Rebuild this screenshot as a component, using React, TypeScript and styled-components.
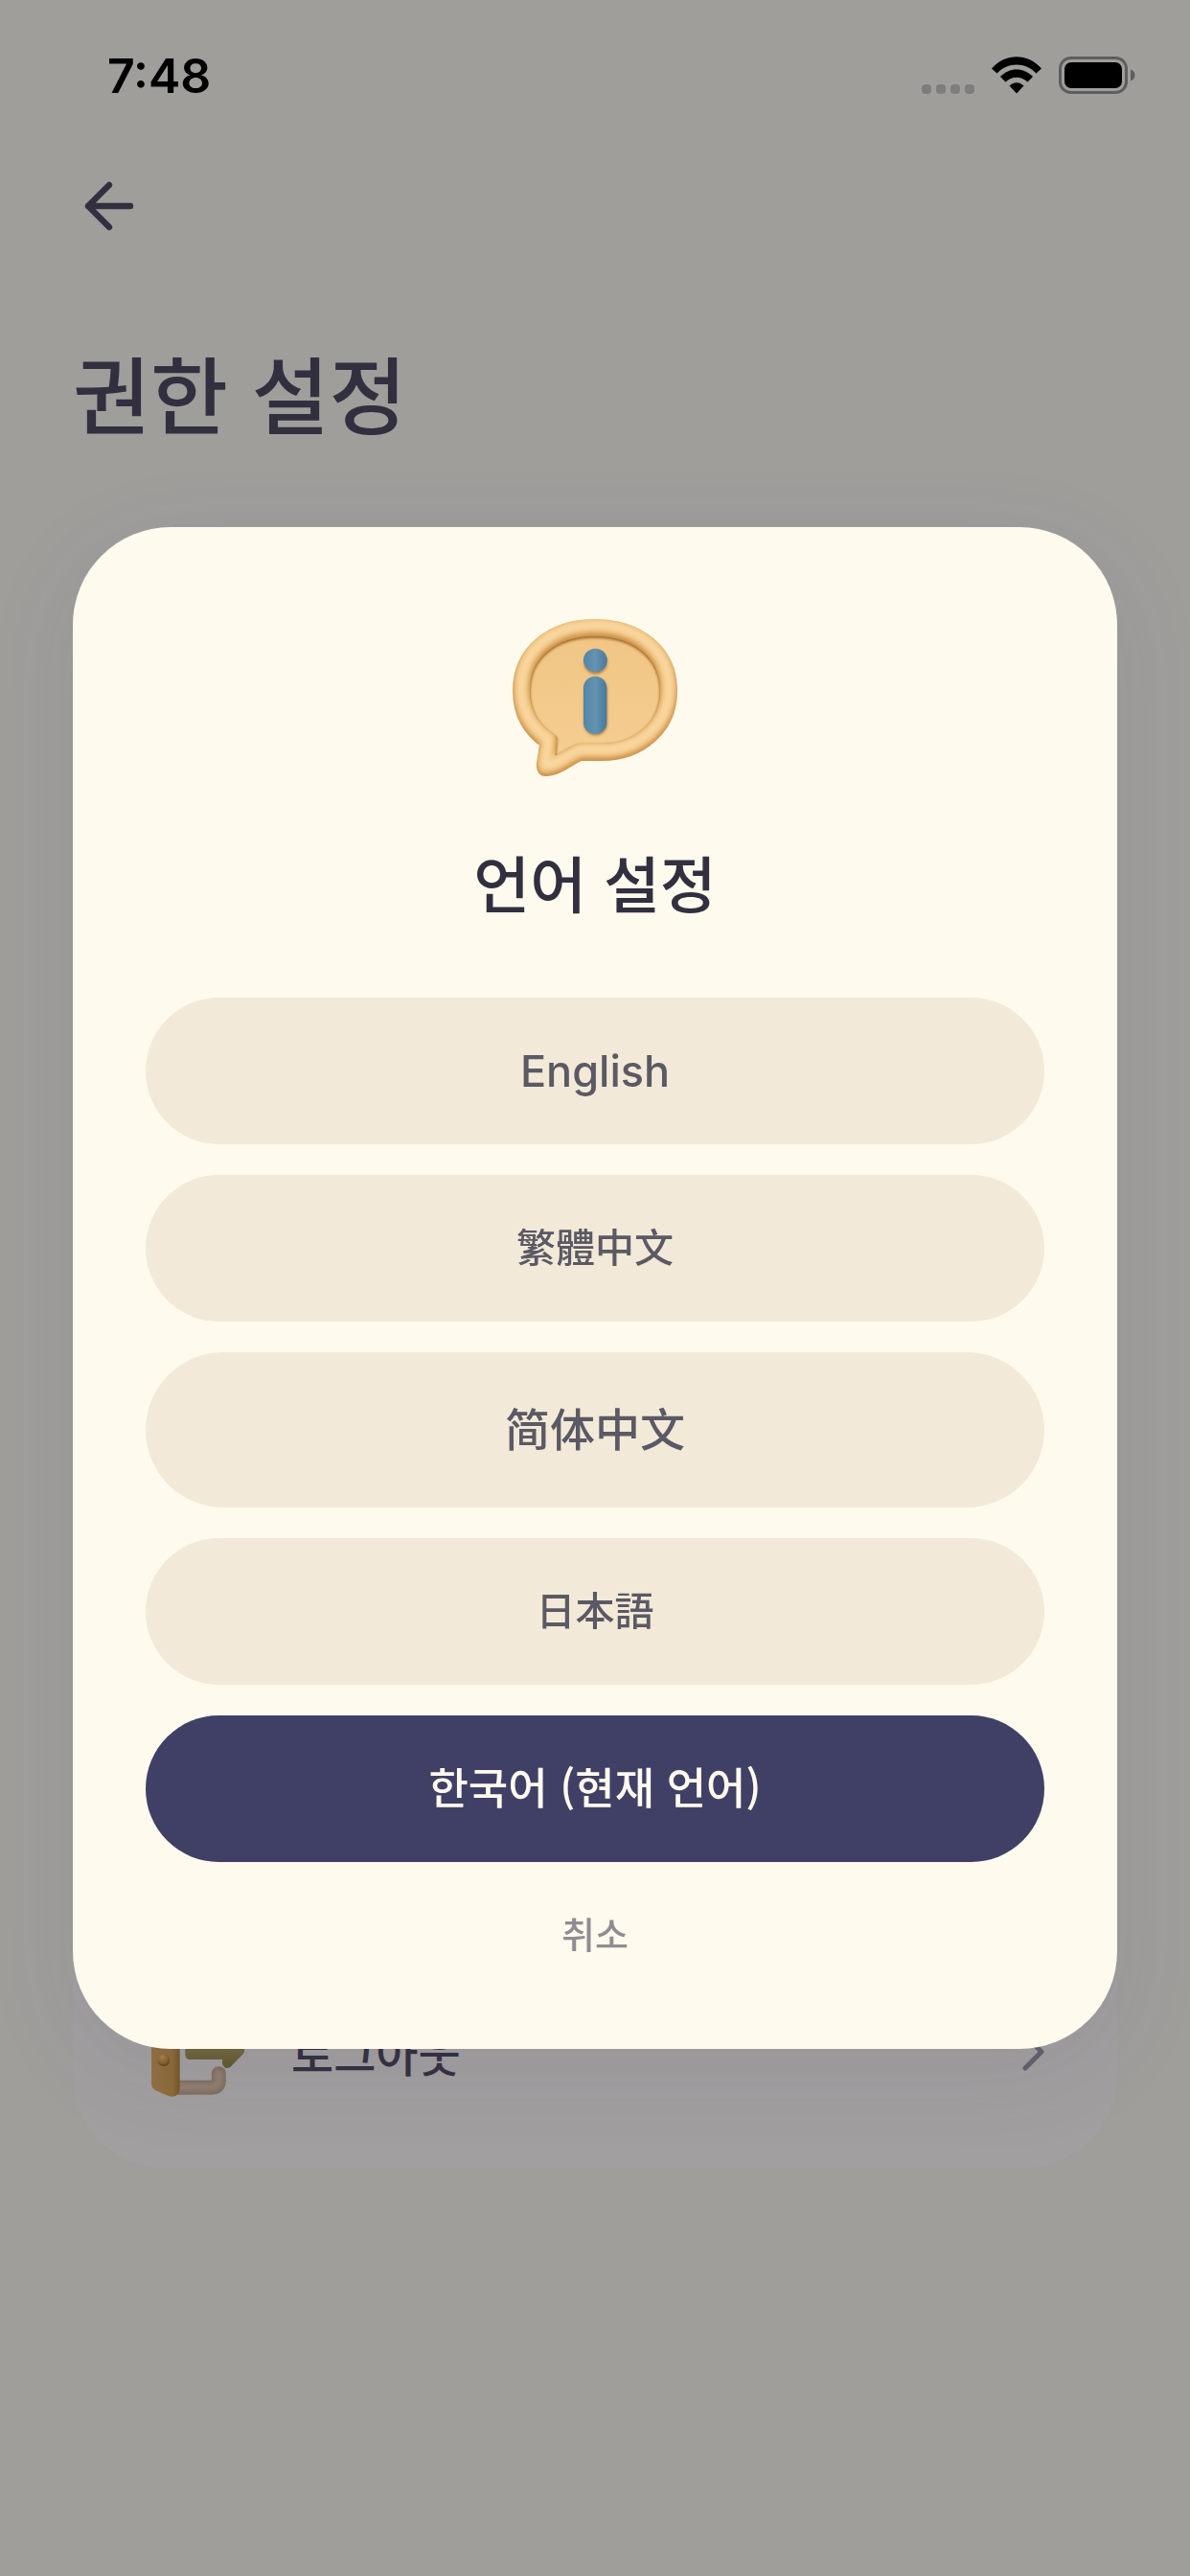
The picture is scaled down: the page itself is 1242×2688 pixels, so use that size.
import React from "react";
import styled, { createGlobalStyle } from "styled-components";

const fonts = {
  latin: `Inter, "Noto Sans CJK KR", sans-serif`,
  ko: `"Noto Sans CJK KR", sans-serif`,
  ja: `"Noto Sans CJK JP", sans-serif`,
  zh: `"Noto Sans CJK SC", sans-serif`,
};

const GlobalStyle = createGlobalStyle`
  *, *::before, *::after { box-sizing: border-box; }
  body {
    margin: 0;
    background: #9f9e9b;
    color: #32303f;
    font-family: ${fonts.ko};
  }
  button {
    border: 0;
    padding: 0;
    background: none;
    color: inherit;
    cursor: pointer;
  }
  svg { display: block; flex: none; }
`;

const Page = styled.div`
  min-height: 100vh;
  display: flex;
  flex-direction: column;
  padding-bottom: 426px;
`;

const StatusBar = styled.header`
  display: flex;
  align-items: center;
  justify-content: space-between;
  height: 158px;
  padding: 0 57px 0 112px;
`;

const Time = styled.time`
  font: 600 50px/60px ${fonts.latin};
  color: #000;
`;

const StatusIcons = styled.div`
  display: flex;
  align-items: center;
  gap: 18px;
`;

const NavBar = styled.nav`
  display: flex;
  align-items: center;
  height: 114px;
  padding: 0 76px;
`;

const BackButton = styled.button`
  display: grid;
  place-items: center;
  width: 76px;
  height: 76px;
`;

const PageTitle = styled.h1`
  margin: 72px 76px 0;
  font-size: 88px;
  line-height: 128px;
  font-weight: 500;
`;

const SettingsCard = styled.main`
  flex: 1;
  display: flex;
  flex-direction: column;
  justify-content: flex-end;
  margin: 96px 76px 0;
  padding: 64px 76px;
  border-radius: 96px;
  background: #a19fa0;
`;

const SettingsRow = styled.button`
  display: flex;
  align-items: center;
  gap: 38px;
  width: 100%;
  text-align: left;
`;

const RowLabel = styled.span`
  flex: 1;
  font: 500 48px/72px ${fonts.ko};
`;

const Overlay = styled.div`
  position: fixed;
  inset: 0;
  display: flex;
  align-items: center;
  justify-content: center;
  padding: 76px;
`;

const Dialog = styled.section`
  display: flex;
  flex-direction: column;
  align-items: center;
  width: 100%;
  padding: 76px;
  border-radius: 102px;
  background: #fffaee;
  box-shadow: 0 24px 96px rgba(92, 72, 100, 0.1);
`;

const DialogTitle = styled.h2`
  margin: 51px 0 72px;
  font-size: 64px;
  line-height: 100px;
  font-weight: 500;
`;

const LanguageList = styled.div`
  display: flex;
  flex-direction: column;
  gap: 32px;
  width: 100%;
`;

const LanguageButton = styled.button<{ $font: string; $size: number; $line?: number; $current?: boolean }>`
  padding: ${(p) => (p.$font === fonts.latin ? "48px" : "45px 48px 51px")};
  border-radius: 81px;
  background: ${(p) => (p.$current ? "#404066" : "#f2e9d8")};
  color: ${(p) => (p.$current ? "#fffaee" : "#5b5964")};
  font-family: ${(p) => p.$font};
  font-weight: 500;
  font-size: ${(p) => p.$size}px;
  line-height: ${(p) => p.$line ?? 57}px;
`;

const CancelButton = styled.button`
  margin-top: 32px;
  padding: 0 48px 4px;
  font: 500 38px/83px ${fonts.ko};
  color: #8f8d92;
`;

const SignalDots = () => (
  <svg width="55" height="40" viewBox="0 0 55 40" fill="#7f7d7c" aria-hidden="true">
    {[0, 15, 30, 45].map((x) => (
      <rect key={x} x={x} y="29" width="10" height="10" rx="4" />
    ))}
  </svg>
);

const WifiIcon = () => (
  <svg width="52" height="40" viewBox="0 0 52 40" aria-hidden="true">
    <path d="M0 12.500C14-4 38-4 52 12.500L46.500 17.500C35 5.500 17 5.500 5.500 17.500Z" />
    <path d="M9 21C18.500 11 33.500 11 43 21L37.500 26.500C31 20 21 20 14.500 26.500Z" />
    <path d="M18.500 30.500C23 26 29 26 33.500 30.500L26 38.500Z" />
  </svg>
);

const BatteryIcon = () => (
  <svg width="80" height="40" viewBox="0 0 80 40" aria-hidden="true">
    <rect x="1.500" y="1.500" width="69" height="36" rx="11" fill="none" stroke="#5f5e5d" strokeWidth="3" />
    <rect x="6" y="6" width="60" height="27" rx="7" />
    <path d="M75 13.500C81 15.500 81 23.500 75 25.500Z" fill="#5f5e5d" />
  </svg>
);

const BackArrow = () => (
  <svg width="52" height="52" viewBox="0 0 52 52" fill="none" stroke="#32303f" strokeWidth="6.400" strokeLinecap="round" strokeLinejoin="round" aria-hidden="true">
    <path d="M48 26H4M26 4L4 26L26 48" />
  </svg>
);

const Chevron = () => (
  <svg width="24" height="44" viewBox="0 0 24 44" fill="none" stroke="#62606b" strokeWidth="5" strokeLinecap="round" strokeLinejoin="round" aria-hidden="true">
    <path d="M4 5L21 22L4 39" />
  </svg>
);

const rim =
  "M362 105C500 105 594 185 594 302C594 418 500 495 385 495L318 495C292 500 245 544 208 543C202 535 214 510 216 460C160 422 132 370 132 302C132 185 225 105 362 105Z";

const InfoIcon = () => (
  <svg width="192" height="192" viewBox="75 18 576 576" aria-hidden="true">
    <defs>
      <linearGradient id="panel" x1="0" y1="0" x2="0" y2="1">
        <stop offset="0" stopColor="#f0c584" />
        <stop offset="1" stopColor="#f6ce92" />
      </linearGradient>
      <linearGradient id="blue" x1="0" y1="0" x2="1" y2="0">
        <stop offset="0" stopColor="#5285a6" />
        <stop offset="0.500" stopColor="#6593b1" />
        <stop offset="1" stopColor="#487a9d" />
      </linearGradient>
      <filter id="soft" x="-20%" y="-20%" width="140%" height="140%">
        <feGaussianBlur stdDeviation="8" />
      </filter>
      <filter id="softer" x="-30%" y="-30%" width="160%" height="160%">
        <feGaussianBlur stdDeviation="5" />
      </filter>
      <mask id="rimMask" maskUnits="userSpaceOnUse" x="75" y="18" width="576" height="576">
        <path d={rim} fill="none" stroke="#fff" strokeWidth="54" strokeLinejoin="round" />
      </mask>
      <clipPath id="panelClip">
        <path d={rim} />
      </clipPath>
    </defs>
    <path d={rim} fill="url(#panel)" />
    <g clipPath="url(#panelClip)">
      <path d={rim} transform="translate(0 4)" fill="none" stroke="#945a16" strokeWidth="55" filter="url(#softer)" />
    </g>
    <g mask="url(#rimMask)">
      <path d={rim} fill="none" stroke="#c98f45" strokeWidth="60" strokeLinejoin="round" />
      <path d={rim} transform="translate(0 -8)" fill="none" stroke="#f4ca8a" strokeWidth="48" filter="url(#soft)" />
      <path d={rim} transform="translate(0 -9)" fill="none" stroke="#fbdca8" strokeWidth="14" filter="url(#soft)" />
    </g>
    <g fill="#8c5a1c" opacity="0.700" filter="url(#softer)">
      <circle cx="365" cy="214" r="36" />
      <rect x="329" y="264" width="72" height="178" rx="36" />
    </g>
    <circle cx="364" cy="207" r="37" fill="url(#blue)" />
    <rect x="327" y="257" width="73" height="181" rx="36" fill="url(#blue)" />
  </svg>
);

const LogoutIcon = () => (
  <svg width="114" height="114" viewBox="309 102 342 342" aria-hidden="true">
    <defs>
      <linearGradient id="door" x1="0" y1="0" x2="1" y2="0">
        <stop offset="0" stopColor="#937041" />
        <stop offset="0.750" stopColor="#8b6a3a" />
        <stop offset="1" stopColor="#745524" />
      </linearGradient>
      <linearGradient id="arrow" x1="0" y1="0" x2="0" y2="1">
        <stop offset="0" stopColor="#7c7549" />
        <stop offset="1" stopColor="#5f582f" />
      </linearGradient>
      <radialGradient id="knob" cx="0.400" cy="0.350" r="0.650">
        <stop offset="0" stopColor="#a8814a" />
        <stop offset="1" stopColor="#7d5a28" />
      </radialGradient>
      <filter id="frameBlur" filterUnits="userSpaceOnUse" x="309" y="102" width="342" height="342">
        <feGaussianBlur stdDeviation="6" />
      </filter>
    </defs>
    <path d="M400 160H515Q538 160 538 183V210M538 341V362Q538 385 515 385H400" fill="none" stroke="#806e5f" strokeWidth="45" strokeLinecap="round" />
    <path d="M400 158H515Q538 160 538 183V210M538 341V362Q538 383 515 383H400" fill="none" stroke="#917f72" strokeWidth="24" strokeLinecap="round" filter="url(#frameBlur)" />
    <path d="M327 160Q327 133 350 133H395Q416 137 416 160V388Q414 420 380 411L340 394Q327 386 327 372Z" fill="url(#door)" />
    <circle cx="366" cy="301" r="18" fill="#6b4a1c" />
    <circle cx="364" cy="295" r="18" fill="url(#knob)" />
    <path d="M448 244H549V230Q556 212 575 222L615 262Q622 270 615 279L575 320Q556 332 549 310V297H448Q433 297 433 282V259Q433 244 448 244Z" fill="url(#arrow)" />
  </svg>
);

const languages = [
  { label: "English", lang: "en", font: fonts.latin, size: 45 },
  { label: "繁體中文", lang: "zh-Hant", font: fonts.ja, size: 41 },
  { label: "简体中文", lang: "zh-Hans", font: fonts.zh, size: 47, line: 66 },
  { label: "日本語", lang: "ja", font: fonts.ja, size: 41 },
  { label: "한국어 (현재 언어)", lang: "ko", font: fonts.ko, size: 45, current: true },
];

export default function App() {
  return (
    <>
      <GlobalStyle />
      <Page lang="ko">
        <StatusBar>
          <Time>7:48</Time>
          <StatusIcons>
            <SignalDots />
            <WifiIcon />
            <BatteryIcon />
          </StatusIcons>
        </StatusBar>
        <NavBar>
          <BackButton type="button" aria-label="뒤로">
            <BackArrow />
          </BackButton>
        </NavBar>
        <PageTitle>권한 설정</PageTitle>
        <SettingsCard>
          <SettingsRow type="button">
            <LogoutIcon />
            <RowLabel>로그아웃</RowLabel>
            <Chevron />
          </SettingsRow>
        </SettingsCard>
      </Page>
      <Overlay>
        <Dialog role="dialog" aria-modal="true" aria-labelledby="language-title" lang="ko">
          <InfoIcon />
          <DialogTitle id="language-title">언어 설정</DialogTitle>
          <LanguageList>
            {languages.map((l) => (
              <LanguageButton
                key={l.lang}
                type="button"
                lang={l.lang}
                aria-pressed={Boolean(l.current)}
                $font={l.font}
                $size={l.size}
                $line={l.line}
                $current={l.current}
              >
                {l.label}
              </LanguageButton>
            ))}
          </LanguageList>
          <CancelButton type="button">취소</CancelButton>
        </Dialog>
      </Overlay>
    </>
  );
}
